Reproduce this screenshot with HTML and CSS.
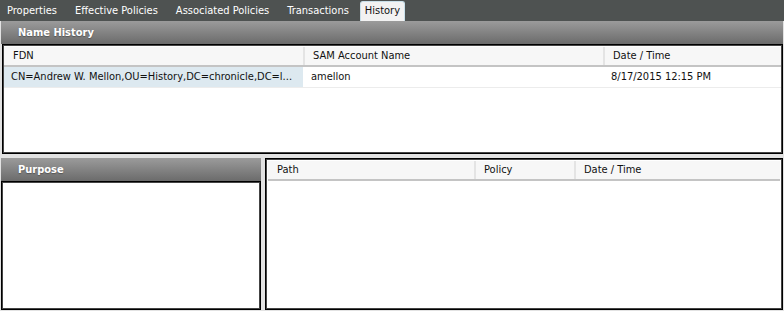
FILE: index.html
```html
<!DOCTYPE html>
<html lang="en">
<head>
<meta charset="UTF-8" />
<title>History</title>
<link rel="stylesheet" href="styles.css">
</head>
<body>
  <div class="tabs">
    <div class="tab">Properties</div>
    <div class="tab">Effective Policies</div>
    <div class="tab">Associated Policies</div>
    <div class="tab">Transactions</div>
    <div class="tab active">History</div>
  </div>

  <div class="page">
    <div class="section-head">Name History</div>
    <div class="box names">
      <div class="row head">
        <div class="cell fdn">FDN</div>
        <div class="cell sam">SAM Account Name</div>
        <div class="cell date">Date / Time</div>
      </div>
      <div class="row">
        <div class="cell fdn selected">CN=Andrew W. Mellon,OU=History,DC=chronicle,DC=l...</div>
        <div class="cell sam">amellon</div>
        <div class="cell date">8/17/2015 12:15 PM</div>
      </div>
    </div>

    <div class="lower">
      <div class="purpose">
        <div class="section-head">Purpose</div>
        <div class="box purpose-body"></div>
      </div>
      <div class="box paths">
        <div class="row head">
          <div class="cell path">Path</div>
          <div class="cell policy">Policy</div>
          <div class="cell date">Date / Time</div>
        </div>
      </div>
    </div>
  </div>
</body>
</html>
```

FILE: styles.css
```css
body {
  margin: 0;
  background: #e2e2e2;
  font-family: 'DejaVu Sans', Verdana, sans-serif;
  font-size: 11px;
  font-stretch: condensed;
  color: #111;
}
.tabs {
  display: flex;
  align-items: flex-end;
  height: 21px;
  background: #4e5251;
}
.tab {
  color: #fff;
  padding: 0 9px;
  height: 19px;
  line-height: 18px;
}
.tab:first-child {
  padding-left: 7px;
}
.tab.active {
  background: #f2f2f2;
  color: #111;
  border: 1px solid #c9e0ea;
  border-bottom: none;
  border-radius: 3px 3px 0 0;
  padding: 0 4px;
  margin-left: 2px;
}
.page {
  padding: 0 1px 1px 1px;
}
.section-head {
  height: 23px;
  line-height: 23px;
  padding-left: 17px;
  color: #fff;
  font-weight: bold;
  text-shadow: 0 1px 1px #555;
  background: linear-gradient(#9b9b9b, #6b6b6b);
}
.box {
  background: #fff;
  border: 1px solid #000;
  box-shadow: inset 1px 1px 0 #444, inset -1px -1px 0 #444;
  box-sizing: border-box;
}
.names {
  height: 110px;
  margin-left: 1px;
  padding: 2px 1px;
}
.row {
  display: flex;
  height: 20px;
  line-height: 19px;
  border-bottom: 1px solid #ececec;
}
.row.head {
  height: 18px;
  line-height: 17px;
  background: #f7f7f7;
  border-bottom: 2px solid #c4c4c4;
}
.cell {
  padding-left: 8px;
  white-space: nowrap;
  overflow: hidden;
}
.head .cell + .cell {
  border-left: 2px solid #e4e4e4;
}
.names .fdn { width: 299px; box-sizing: border-box; padding-left: 7px; }
.names .row.head .fdn { padding-left: 9px; }
.names .sam { width: 300px; box-sizing: border-box; }
.names .date { flex: 1; }
.selected {
  background: #dde9f0;
}
.lower {
  display: flex;
  margin-top: 4px;
  height: 152px;
}
.purpose {
  width: 260px;
  display: flex;
  flex-direction: column;
}
.purpose-body {
  flex: 1;
}
.paths {
  flex: 1;
  margin-left: 4px;
  padding: 2px;
}
.paths .path { width: 206px; box-sizing: border-box; padding-left: 9px; }
.paths .policy { width: 100px; box-sizing: border-box; }
.paths .date { flex: 1; }
```
